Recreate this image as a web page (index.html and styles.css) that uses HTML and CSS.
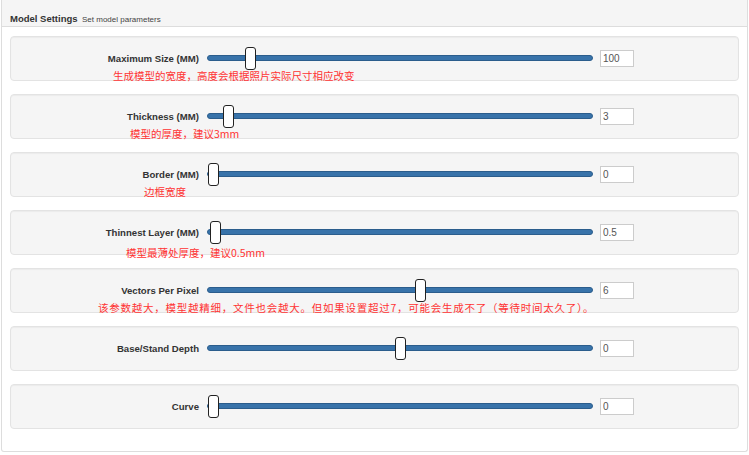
FILE: index.html
```html
<!DOCTYPE html>
<html lang="en">
<head>
	<meta charset="utf-8" />
	<title>Model Settings</title>
    <link rel="stylesheet" href="styles.css">
</head>
<body>
    <div class="panel">
        <div class="panel-heading">
            <span class="title">Model Settings</span>
            <span class="subtitle">Set model parameters</span>
        </div>
        <div class="panel-body">
            <div class="well">
                <label>Maximum Size (MM)</label>
                <input type="range" min="0" max="1000" value="100" />
                <input class="num" type="text" value="100" />
                <p class="hint hint-size">生成模型的宽度，高度会根据照片实际尺寸相应改变</p>
            </div>
            <div class="well">
                <label>Thickness (MM)</label>
                <input type="range" min="1" max="50" value="3" />
                <input class="num" type="text" value="3" />
                <p class="hint hint-thick">模型的厚度，建议3mm</p>
            </div>
            <div class="well">
                <label>Border (MM)</label>
                <input type="range" min="0" max="50" value="0" />
                <input class="num" type="text" value="0" />
                <p class="hint hint-border">边框宽度</p>
            </div>
            <div class="well">
                <label>Thinnest Layer (MM)</label>
                <input type="range" min="0" max="100" value="0.5" step="0.5" />
                <input class="num" type="text" value="0.5" />
                <p class="hint hint-layer">模型最薄处厚度，建议0.5mm</p>
            </div>
            <div class="well">
                <label>Vectors Per Pixel</label>
                <input type="range" min="1" max="10" value="6" />
                <input class="num" type="text" value="6" />
                <p class="hint hint-vectors">该参数越大，模型越精细，文件也会越大。但如果设置超过7，可能会生成不了（等待时间太久了）。</p>
            </div>
            <div class="well">
                <label>Base/Stand Depth</label>
                <input type="range" min="-10" max="10" value="0" />
                <input class="num" type="text" value="0" />
            </div>
            <div class="well">
                <label>Curve</label>
                <input type="range" min="0" max="100" value="0" />
                <input class="num" type="text" value="0" />
            </div>
        </div>
    </div>
</body>
</html>
```

FILE: styles.css
```css
body{
    margin: 0;
    background: #fff;
    font-family: "Liberation Sans", Arial, sans-serif;
    color: #333;
}
.panel{
    margin: 0 1px;
    height: 452px;
    box-sizing: border-box;
    border: 1px solid #ddd;
    border-top: none;
    border-radius: 0 0 3px 3px;
}
.panel-heading{
    height: 27px;
    box-sizing: border-box;
    padding: 8px 8px 0;
    background: #f5f5f5;
    border-bottom: 1px solid #ddd;
}
.title{
    font-size: 9.5px;
    font-weight: bold;
    color: #333;
}
.subtitle{
    font-size: 8px;
    color: #444;
}
.panel-body{
    padding: 9px 8px 8px;
}
.well{
    height: 45px;
    box-sizing: border-box;
    margin-bottom: 13px;
    padding-top: 9px;
    background: #f5f5f5;
    border: 1px solid #e3e3e3;
    border-radius: 4px;
    box-shadow: inset 0 1px 1px rgba(0,0,0,0.04);
    display: grid;
    grid-template-columns: 188px 386px 34px;
    grid-template-rows: 24px auto;
    column-gap: 8px;
    align-items: center;
}
.well label{
    text-align: right;
    font-size: 9.6px;
    font-weight: bold;
    color: #333;
}
input[type=range]{
    -webkit-appearance: none;
    appearance: none;
    margin: 0;
    width: 386px;
    height: 24px;
    background: transparent;
}
input[type=range]::-webkit-slider-runnable-track{
    height: 6px;
    background: #3873aa;
    border: 1px solid #2b5d8c;
    box-sizing: border-box;
    border-radius: 3px;
}
input[type=range]::-webkit-slider-thumb{
    -webkit-appearance: none;
    width: 11px;
    height: 23px;
    margin-top: -9px;
    background: #fff;
    border: 1px solid #222;
    border-radius: 3px;
}
input[type=range]::-moz-range-track{
    height: 6px;
    background: #3873aa;
    border: 1px solid #2b5d8c;
    border-radius: 3px;
}
input[type=range]::-moz-range-thumb{
    width: 11px;
    height: 23px;
    background: #fff;
    border: 1px solid #222;
    border-radius: 3px;
}
.num{
    margin-left: -1px;
    width: 34px;
    height: 17px;
    box-sizing: border-box;
    padding: 0 2px;
    border: 1px solid #ccc;
    background: #fff;
    font-family: "Liberation Sans", Arial, sans-serif;
    font-size: 10px;
    color: #555;
}
.hint{
    grid-column: 1 / 4;
    margin: -1px 0 0;
    line-height: 14px;
    font-family: "Noto Sans CJK SC", sans-serif;
    font-size: 10.5px;
    color: #f33;
    white-space: nowrap;
}
.hint-size{ padding-left: 102px; }
.hint-thick{ padding-left: 119px; }
.hint-border{ padding-left: 133px; }
.hint-layer{ padding-left: 115px; margin-top: 2px; }
.hint-vectors{ padding-left: 87px; letter-spacing: 0.75px; }
```
